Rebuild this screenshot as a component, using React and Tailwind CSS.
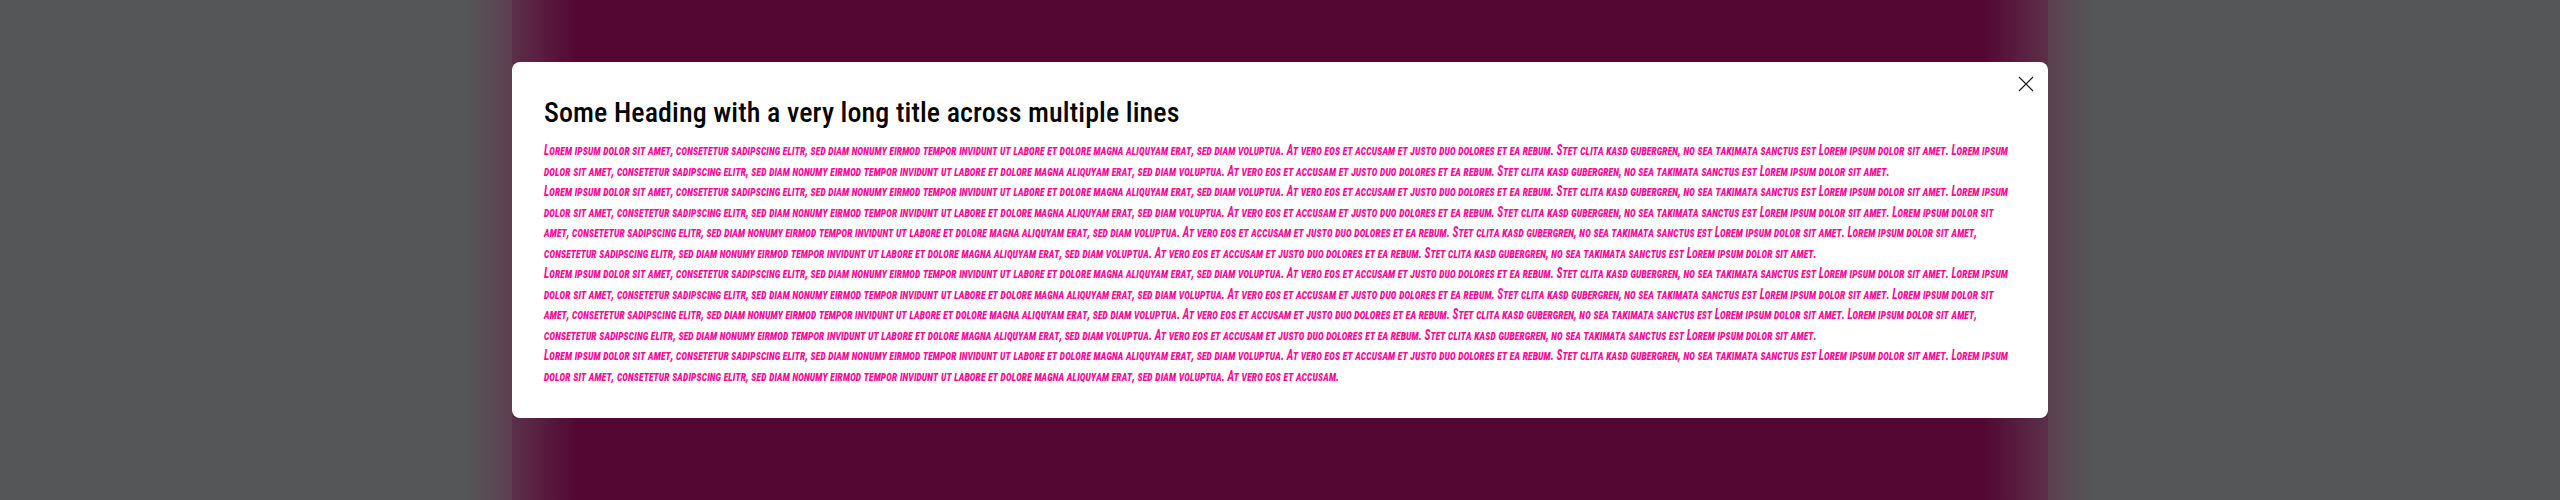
const lorem = 'Lorem ipsum dolor sit amet, consetetur sadipscing elitr, sed diam nonumy eirmod tempor invidunt ut labore et dolore magna aliquyam erat, sed diam voluptua. At vero eos et accusam et justo duo dolores et ea rebum. Stet clita kasd gubergren, no sea takimata sanctus est Lorem ipsum dolor sit amet.'
const tail = 'Lorem ipsum dolor sit amet, consetetur sadipscing elitr, sed diam nonumy eirmod tempor invidunt ut labore et dolore magna aliquyam erat, sed diam voluptua. At vero eos et accusam.'

const CloseIcon = () => (
  <svg width="16" height="16" viewBox="0 0 16 16" fill="none" stroke="#1a1a1a" strokeWidth="1.1">
    <path d="M1 1l14 14M15 1L1 15" />
  </svg>
)

const App = () => {
  return (
    <div className="flex h-[500px] w-full overflow-hidden bg-[#545657]">
      <div className="flex-1 bg-[linear-gradient(to_right,#545657_calc(100%-45px),#5e4050_100%)]" />
      <div className="w-[1536px] bg-[linear-gradient(to_right,#5c3049_0px,#540733_65px,#540733_1471px,#5c3049_1536px)] pt-[62px]">
        <div className="relative rounded-lg bg-white px-8 py-8 font-['Roboto',sans-serif]">
          <button className="absolute right-[14px] top-[14px]">
            <CloseIcon />
          </button>
          <h2 className="mb-[8px] text-[28px] font-medium leading-[38px] tracking-[0.1px] text-[#050505] [font-stretch:75%]">
            Some Heading with a very long title across multiple lines
          </h2>
          {/* the original face is narrower than Roboto Condensed */}
          <div className="w-[1822px] origin-left scale-x-[0.808] text-[14px] font-bold italic leading-[20.5px] text-[#ff0a96] [font-stretch:75%] [font-variant:small-caps]">
            <p>{lorem} {lorem}</p>
            <p>{lorem} {lorem} {lorem} {lorem}</p>
            <p>{lorem} {lorem} {lorem} {lorem}</p>
            <p>{lorem} {tail}</p>
          </div>
        </div>
      </div>
      <div className="flex-1 bg-[linear-gradient(to_left,#545657_calc(100%-45px),#5e4050_100%)]" />
    </div>
  )
}

export default App
